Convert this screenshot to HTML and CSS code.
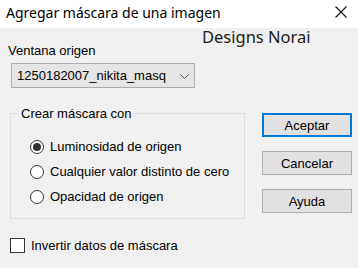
FILE: index.html
```html
<!DOCTYPE html>
<html lang="es">
<head>
<meta charset="utf-8">
<link rel="stylesheet" href="styles.css">
</head>
<body>
<div class="window">
  <div class="titlebar">
    <span class="title">Agregar máscara de una imagen</span>
    <svg class="close" width="12" height="12" viewBox="0 0 12 12"><path d="M0.5 0.5 L11.5 11.5 M11.5 0.5 L0.5 11.5" stroke="#111" stroke-width="1.1" fill="none"/></svg>
  </div>
  <div class="watermark">Designs Norai</div>
  <div class="content">
    <div class="label">Ventana origen</div>
    <div class="combo">
      <span class="combo-text">1250182007_nikita_masq</span>
      <svg class="chev" width="9" height="5" viewBox="0 0 9 5"><path d="M0.5 0.5 L4.5 4.5 L8.5 0.5" stroke="#555" stroke-width="1" fill="none"/></svg>
    </div>
    <div class="main-row">
      <fieldset class="group">
        <legend>Crear máscara con</legend>
        <div class="radios">
          <div class="radio"><span class="dot checked"></span><span>Luminosidad de origen</span></div>
          <div class="radio"><span class="dot"></span><span>Cualquier valor distinto de cero</span></div>
          <div class="radio"><span class="dot"></span><span>Opacidad de origen</span></div>
        </div>
      </fieldset>
      <div class="buttons">
        <div class="btn default">Aceptar</div>
        <div class="btn">Cancelar</div>
        <div class="btn">Ayuda</div>
      </div>
    </div>
    <div class="check"><span class="box"></span><span>Invertir datos de máscara</span></div>
  </div>
</div>
</body>
</html>
```

FILE: styles.css
```css
html, body {
  margin: 0;
  padding: 0;
  background: #f0f0f0;
}
.window {
  position: relative;
  width: 358px;
  height: 268px;
  background: #f0f0f0;
  overflow: hidden;
  font-family: "Liberation Sans", Arial, sans-serif;
  font-size: 13px;
  color: #000;
}
.titlebar {
  height: 28px;
  background: #fff;
  display: flex;
  align-items: center;
  justify-content: space-between;
  padding: 0 11px 0 6px;
}
.title {
  font-family: "Noto Sans", "Open Sans", sans-serif;
  font-size: 14px;
  color: #000;
  margin-top: -4px;
}
.close {
  margin-top: -4px;
}
.watermark {
  position: absolute;
  left: 202px;
  top: 25px;
  font-family: "Noto Sans", "Open Sans", sans-serif;
  font-size: 16.5px;
  color: #1a1a1a;
}
.content {
  padding: 15px 0 0 10px;
}
.label {
  line-height: 15px;
  margin-left: -2px;
}
.combo {
  margin-top: 5px;
  margin-left: 1px;
  height: 23px;
  border: 1px solid #adadad;
  background: #e5e5e5;
  display: flex;
  align-items: center;
  justify-content: space-between;
  padding: 0 5px 0 5px;
  box-sizing: content-box;
  width: 172px;
}
.combo-text {
  line-height: 15px;
}
.chev {
  margin-top: 1px;
}
.main-row {
  display: flex;
  align-items: flex-start;
  margin-top: 18px;
}
.group {
  margin: 0;
  padding: 0 0 9px 0;
  width: 233px;
  border: 1px solid #dcdcdc;
  min-width: 0;
}
.group legend {
  margin-left: 8px;
  padding: 0 2px;
  line-height: 15px;
}
.radios {
  padding: 13px 0 0 19px;
  display: flex;
  flex-direction: column;
}
.radio {
  height: 25px;
  display: flex;
  align-items: center;
  gap: 6px;
}
.dot {
  width: 12px;
  height: 12px;
  border: 1px solid #333;
  border-radius: 50%;
  background: #fff;
  display: flex;
  align-items: center;
  justify-content: center;
  flex: none;
}
.dot.checked::after {
  content: "";
  width: 8px;
  height: 8px;
  border-radius: 50%;
  background: #333;
}
.buttons {
  margin-left: 17px;
  margin-top: 7px;
  display: flex;
  flex-direction: column;
  gap: 14px;
}
.btn {
  width: 88px;
  height: 22px;
  border: 1px solid #adadad;
  background: #e1e1e1;
  display: flex;
  align-items: center;
  justify-content: center;
  line-height: 15px;
}
.btn.default {
  border: 2px solid #0078d7;
  width: 86px;
  height: 20px;
}
.check {
  margin-top: 19px;
  display: flex;
  align-items: center;
  gap: 6px;
  line-height: 15px;
}
.box {
  width: 13px;
  height: 13px;
  border: 1px solid #333;
  background: #fff;
  flex: none;
}
```
